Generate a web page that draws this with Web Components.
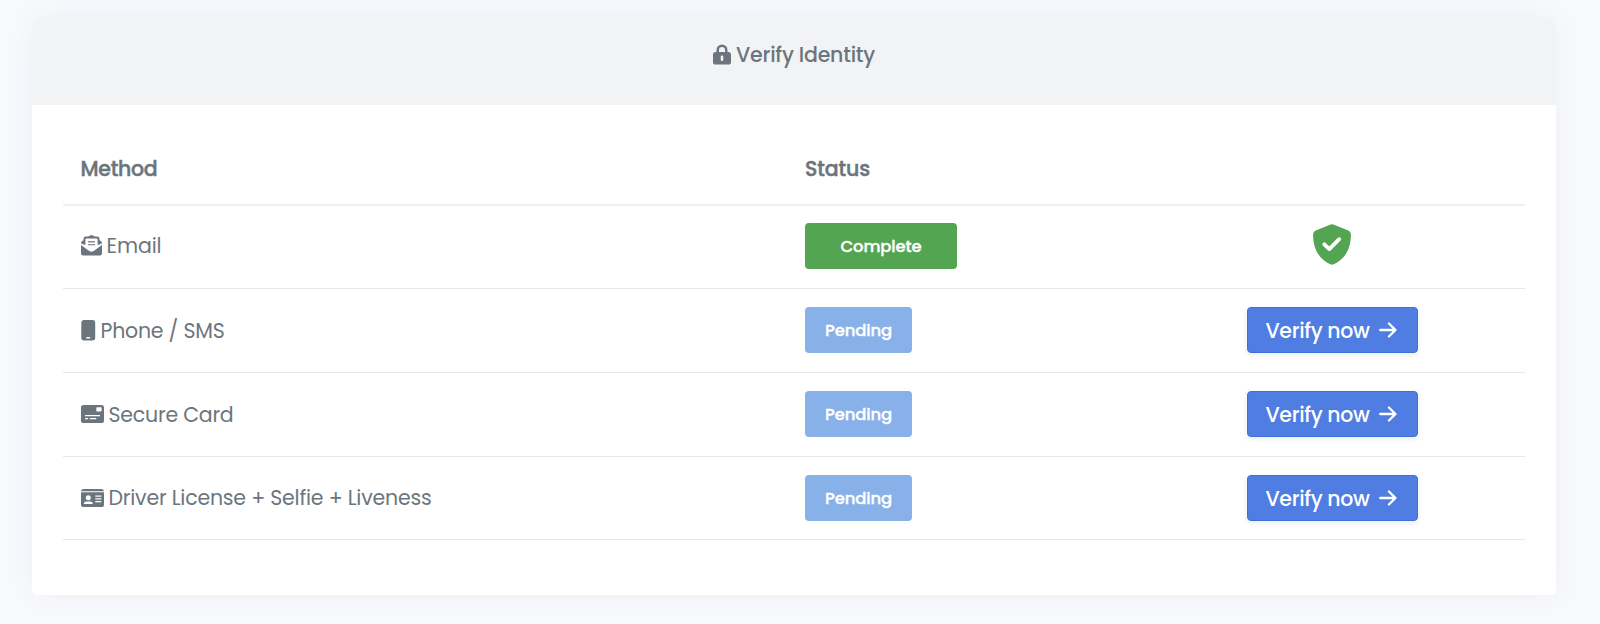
<!DOCTYPE html>
<html lang="en"><head><meta charset="utf-8"><title>Verify Identity</title>
<style>
body{margin:0;height:624px;overflow:hidden;background:#f8f9fd;font-family:Poppins,Inter,"Liberation Sans",sans-serif;color:#6c757d;font-size:20.5px}
</style></head><body>
<verify-card>
  <span slot="title"><ui-icon name="lock"></ui-icon><fit-text w="139" style="font-weight:500">Verify Identity</fit-text></span>
  <method-row head><fit-text slot="method" w="77">Method</fit-text><fit-text slot="status" w="65">Status</fit-text></method-row>
  <method-row first><ui-icon slot="method" name="mail"></ui-icon><fit-text slot="method" w="55">Email</fit-text><status-badge slot="status" done><fit-text w="81">Complete</fit-text></status-badge><ui-icon slot="action" name="shield"></ui-icon></method-row>
  <method-row><ui-icon slot="method" name="phone"></ui-icon><fit-text slot="method" w="124">Phone / SMS</fit-text><status-badge slot="status"><fit-text w="67">Pending</fit-text></status-badge><verify-button slot="action"></verify-button></method-row>
  <method-row><ui-icon slot="method" name="card"></ui-icon><fit-text slot="method" w="125">Secure Card</fit-text><status-badge slot="status"><fit-text w="67">Pending</fit-text></status-badge><verify-button slot="action"></verify-button></method-row>
  <method-row last><ui-icon slot="method" name="id"></ui-icon><fit-text slot="method" w="323">Driver License + Selfie + Liveness</fit-text><status-badge slot="status"><fit-text w="67">Pending</fit-text></status-badge><verify-button slot="action"></verify-button></method-row>
</verify-card>
<script>
const define = (name, html, setup) => {
  const t = document.createElement('template');
  t.innerHTML = html;
  customElements.define(name, class extends HTMLElement {
    connectedCallback() {
      if (this.shadowRoot) return;
      this.attachShadow({mode: 'open'}).append(t.content.cloneNode(true));
      if (setup) setup(this);
    }
  });
};
const icons = {
  lock: [18, 21, '<path fill-rule="evenodd" d="M3.500 8V6a5.500 5.500 0 0 1 11 0v2h.9A2.600 2.600 0 0 1 18 10.600v7.400a2.600 2.600 0 0 1-2.600 2.600H2.600A2.600 2.600 0 0 1 0 18v-7.400A2.600 2.600 0 0 1 2.600 8zM6 8h6V6a3 3 0 0 0-6 0zM7.700 12.800v3a1.300 1.300 0 0 0 2.600 0v-3a1.300 1.300 0 0 0-2.600 0z"/>'],
  mail: [21, 21, '<path d="M7 2 9 .6Q10.500-.4 12 .6L14 2zM3 5v4.800L0 8.300Q0 6.500 1.300 6zM18 5v4.800l3-1.500Q21 6.500 19.700 6zM0 9.900l8.300 6q2.200 1.500 4.400 0l8.300-6V18a2.500 2.500 0 0 1-2.500 2.500h-16A2.500 2.500 0 0 1 0 18z"/><path fill-rule="evenodd" d="M4.700 1.500h11.600A2.200 2.200 0 0 1 18.500 3.700V9l-1.900 1.300V4.300a.9.9 0 0 0-.9-.9H5.300a.9.9 0 0 0-.9.9v6L2.500 9V3.700A2.200 2.200 0 0 1 4.700 1.500z"/><path d="M7 6h7v1.400H7zM7 8.900h7v1.400H7z" opacity=".8"/>'],
  phone: [15, 21, '<path fill-rule="evenodd" d="M3 0h8.500a2.700 2.700 0 0 1 2.700 2.700v15.100a2.700 2.700 0 0 1-2.700 2.700H3a2.700 2.700 0 0 1-2.700-2.700V2.700A2.700 2.700 0 0 1 3 0zM5.900 17.100a.7.7 0 0 0 0 1.500h2.700a.7.7 0 0 0 0-1.500z"/>'],
  card: [23, 18, '<path fill-rule="evenodd" d="M2.600 0h17.800A2.600 2.600 0 0 1 23 2.600v12.800a2.600 2.600 0 0 1-2.600 2.600H2.600A2.600 2.600 0 0 1 0 15.400V2.600A2.600 2.600 0 0 1 2.600 0zM16.200 2.200a.9.900 0 0 0-.9.9v2.500c0 .5.4.9.9.9h3.500c.5 0 .9-.4.9-.9V3.100a.9.9 0 0 0-.9-.9zM4 10v1.200h15V10zM4 12.900v1.400h3.200v-1.400zM8.900 12.900v1.400h6.300v-1.400z"/>'],
  id: [23, 18, '<path fill-rule="evenodd" d="M2.600 0h17.800A2.600 2.600 0 0 1 23 2.200H0A2.600 2.600 0 0 1 2.600 0zM0 3.300h23v12.100a2.600 2.600 0 0 1-2.600 2.600H2.600A2.600 2.600 0 0 1 0 15.400zM7.300 6.200a2.500 2.500 0 1 0 0 5 2.500 2.500 0 0 0 0-5zM5.500 12.400a2.700 2.700 0 0 0-2.700 2.700h9a2.700 2.700 0 0 0-2.700-2.700zM14.300 6.400v1.300h6V6.400zM14.300 9.200v1.300h6V9.200zM14.300 12v1.300h6V12z"/>'],
  shield: [38, 41, '<path fill="#54a551" d="M17.600.5q1.400-.7 2.800 0L35.300 6.600Q37.800 7.800 37.900 10.500C38 22 34 34 20.700 40.300q-1.700.7-3.400 0C4 34 0 22 .1 10.500Q.2 7.800 2.700 6.600z"/><path d="m11.300 20.300 5 4.800 9.900-9.900" fill="none" stroke="#fff" stroke-width="3.800" stroke-linecap="round" stroke-linejoin="round"/>'],
  arrow: [18, 16, '<path d="M1.200 8h15M9.900 1.500 16.500 8l-6.600 6.500" fill="none" stroke="currentColor" stroke-width="2.300" stroke-linecap="round" stroke-linejoin="round"/>']
};
// Spreads a label over its design width with even tracking.
define('fit-text', '<style>:host{display:inline-block;white-space:nowrap;line-height:31px}</style><slot></slot>', el => {
  const w = +el.getAttribute('w');
  queueMicrotask(() => {
    el.style.letterSpacing = (w - el.getBoundingClientRect().width) / el.textContent.length + 'px';
  });
});
define('ui-icon', '<style>:host{display:inline-block;flex:none}svg{display:block;fill:currentColor;overflow:visible}</style><svg></svg>', el => {
  const [w, h, art] = icons[el.getAttribute('name')], svg = el.shadowRoot.querySelector('svg');
  svg.setAttribute('width', w); svg.setAttribute('height', h); svg.setAttribute('viewBox', `0 0 ${w} ${h}`);
  svg.innerHTML = art;
});
define('status-badge', `<style>:host{display:flex;align-items:center;justify-content:center;box-sizing:border-box;width:107px;height:46px;border-radius:4px;background:#88b1ea;color:#fff;font-size:16.400px;font-weight:500;-webkit-text-stroke:.35px currentColor}
:host([done]){width:152px;background:#54a551}</style><slot></slot>`);
define('verify-button', `<style>:host{display:block}button{display:flex;align-items:center;gap:9px;box-sizing:border-box;width:171px;height:46px;padding:0 0 0 18px;border:1px solid #3b71dc;border-radius:4px;background:#507de2;color:#fff;font:500 20.500px Poppins,Inter,sans-serif;box-shadow:0 2px 6px rgba(0,0,0,.08)}</style>
<button><fit-text w="104">Verify now</fit-text><ui-icon name="arrow"></ui-icon></button>`);
define('method-row', `<style>:host{display:grid;grid-template-columns:724.5px 330px 1fr;box-sizing:border-box;height:84px;padding-left:17.5px;border-bottom:1px solid #e3e9ef}
:host([first]),:host([last]){height:83px}
:host([head]){height:66px;border-bottom:2px solid #eff0f6;font-weight:500;-webkit-text-stroke:.45px currentColor}
:host([head]) div{align-items:flex-start;padding:13px 0 0}
div{display:flex;align-items:center;gap:5px}
.method{padding-bottom:1px}
.status,.action{padding-bottom:1px}
.action{justify-content:center;padding-left:4px}
:host([first]) .method{padding-bottom:3px}
:host([first]) .status{padding-bottom:2px}
:host([first]) .action{padding-bottom:6px}
:host([last]) .status,:host([last]) .action{padding-bottom:0}</style>
<div class="method"><slot name="method"></slot></div><div class="status"><slot name="status"></slot></div><div class="action"><slot name="action"></slot></div>`);
define('verify-card', `<style>:host{display:block;padding:16px 44px 0 32px}
section{box-sizing:border-box;height:579px;border-radius:16px 16px 5px 5px;background:#fff;box-shadow:0 0 28px rgba(60,70,90,.05)}
header{height:89px;border-radius:14px 14px 0 0;background:#f2f3f5;display:flex;justify-content:center;box-sizing:border-box;padding-top:23px}
header ::slotted(span){display:flex;align-items:center;gap:5px;height:31px}
main{padding:35px 31px 0}</style>
<section><header><slot name="title"></slot></header><main><slot></slot></main></section>`);
</script></body></html>
